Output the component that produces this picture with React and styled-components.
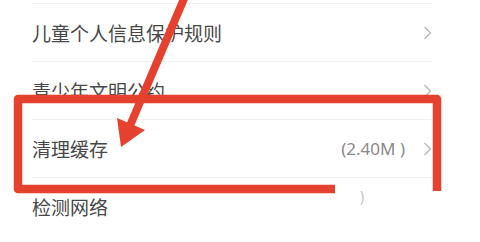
import React from "react";
import styled, { createGlobalStyle } from "styled-components";

const GlobalStyle = createGlobalStyle`
  html, body {
    margin: 0;
    padding: 0;
    background: #fff;
  }
  body {
    font-family: "Noto Sans CJK SC", "Noto Sans", sans-serif;
  }
`;

const Screen = styled.div`
  position: relative;
  width: 480px;
  height: 242px;
  overflow: hidden;
  background: #fff;
`;

const List = styled.div`
  display: flex;
  flex-direction: column;
  padding-top: 3px;
`;

const Row = styled.div`
  display: flex;
  align-items: center;
  height: 57px;
  margin: 0 48px 0 32px;
  border-top: 1px solid #f0f0f0;
`;

const Label = styled.div`
  flex: 1;
  font-size: 19px;
  color: #474747;
`;

const Extra = styled.div`
  font-family: "Noto Sans", sans-serif;
  font-size: 17px;
  color: #8a8a8a;
  margin-right: 18px;
`;

const Chevron = styled.svg`
  width: 9px;
  height: 14px;
  flex-shrink: 0;
  visibility: ${(p) => (p.hidden ? "hidden" : "visible")};
`;

const Overlay = styled.svg`
  position: absolute;
  left: 0;
  top: 0;
  width: 480px;
  height: 242px;
  pointer-events: none;
`;

const Smudge = styled.div`
  position: absolute;
  left: 360px;
  top: 186px;
  font-size: 14px;
  color: #999;
  opacity: 0.7;
`;

const items = [
  { label: "儿童个人信息保护规则" },
  { label: "青少年文明公约" },
  { label: "清理缓存", extra: "(2.40M )" },
  { label: "检测网络", noArrow: true },
];

const RED = "#e6412f";

const App = () => {
  return (
    <Screen>
      <GlobalStyle />
      <List>
        {items.map((item, i) => (
          <Row key={i}>
            <Label>{item.label}</Label>
            {item.extra ? <Extra>{item.extra}</Extra> : null}
            <Chevron viewBox="0 0 9 14" hidden={item.noArrow}>
              <path d="M1.5 1 L7.5 7 L1.5 13" fill="none" stroke="#b8b8b8" strokeWidth="1.4" />
            </Chevron>
          </Row>
        ))}
      </List>
      <Smudge>)</Smudge>
      <Overlay viewBox="0 0 480 242">
        <path
          d="M335 189 L18 189 L18 99 L437 99 L437 191"
          fill="none"
          stroke={RED}
          strokeWidth="8.5"
          strokeLinejoin="round"
        />
        <line x1="186" y1="-6" x2="129" y2="128" stroke={RED} strokeWidth="8" />
        <polygon points="121,147 117,118 145,130" fill={RED} />
      </Overlay>
    </Screen>
  );
};

export default App;
